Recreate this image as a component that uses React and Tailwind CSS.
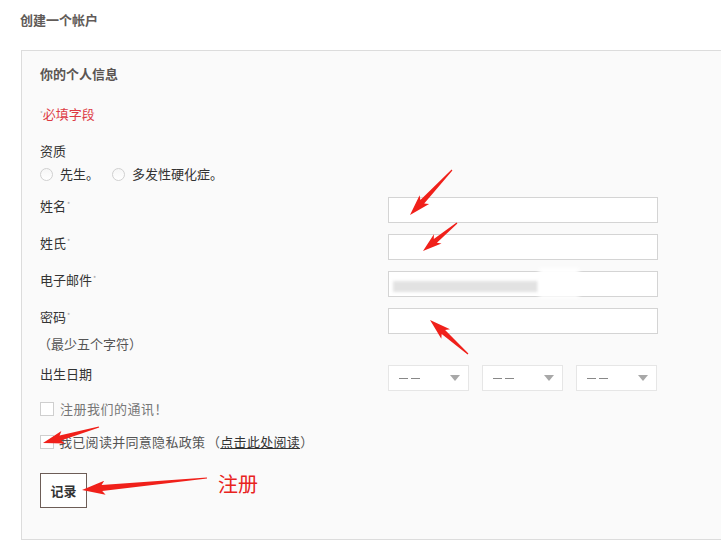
import React from "react";

const arrowPoints = (tx, ty, px, py, head = 18, hw = 6.5, sw = 2.4) => {
  const dx = px - tx;
  const dy = py - ty;
  const len = Math.hypot(dx, dy);
  const ux = dx / len;
  const uy = dy / len;
  const nx = -uy;
  const ny = ux;
  const neckX = px - ux * head;
  const neckY = py - uy * head;
  const barbX = neckX - ux * 3;
  const barbY = neckY - uy * 3;
  const pts = [
    [tx + nx * 0.6, ty + ny * 0.6],
    [neckX + nx * sw, neckY + ny * sw],
    [barbX + nx * hw, barbY + ny * hw],
    [px, py],
    [barbX - nx * hw, barbY - ny * hw],
    [neckX - nx * sw, neckY - ny * sw],
    [tx - nx * 0.6, ty - ny * 0.6],
  ];
  return pts.map((p) => p.map((v) => v.toFixed(1)).join(",")).join(" ");
};

const arrows = [
  [452, 170, 410, 215, 18, 6.5, 2.6],
  [457, 223, 423, 251, 16, 6, 2.4],
  [468, 354, 430, 320, 18, 6.5, 2.6],
  [99, 427, 43, 443, 18, 6.5, 2.6],
  [207, 478, 82, 490, 20, 7, 3],
];

const Req = () => <span className="text-[7px] text-[#999] align-top relative -top-[2px] ml-[1px]">*</span>;

const Field = ({ label, children, hint }) => (
  <div className="flex">
    <div className="w-[348px]">
      <div className="leading-[18px] text-[#333]">
        {label}
        <Req />
      </div>
      {hint && <div className="leading-[18px] mt-[9px] text-[#555] -ml-[2px]">{hint}</div>}
    </div>
    {children}
  </div>
);

const Input = ({ children }) => (
  <div className="relative w-[270px] h-[26px] border border-[#d4d4d4] bg-white">{children}</div>
);

const Select = () => (
  <div className="w-[81px] h-[26px] border border-[#e6e6e6] bg-white flex items-center justify-between pl-[10px] pr-[8px]">
    <span className="flex gap-[3px]">
      <span className="w-[9px] h-px bg-[#888]" />
      <span className="w-[9px] h-px bg-[#888]" />
    </span>
    <span className="w-0 h-0 border-l-[5px] border-r-[5px] border-t-[6px] border-l-transparent border-r-transparent border-t-[#a8a8a8]" />
  </div>
);

const Radio = () => (
  <span className="inline-block w-[13px] h-[13px] rounded-full border border-[#d0d0d0] bg-gradient-to-b from-[#f6f6f6] to-white" />
);

const Check = () => <span className="inline-block w-[14px] h-[14px] border border-[#cfcfcf] bg-white" />;

export default function App() {
  return (
    <div
      className="relative w-[721px] h-[542px] overflow-hidden bg-white text-[13px]"
      style={{ fontFamily: '"Noto Sans CJK SC", "Microsoft YaHei", sans-serif' }}
    >
      <h1 className="pl-5 pt-[11px] h-[50px] leading-[18px] text-[13px] font-bold text-[#615b58]">创建一个帐户</h1>

      <div className="ml-[21px] w-[720px] h-[490px] border border-[#dcdcdc] bg-[#fafafa] pl-[18px] pt-[13px]">
        <h2 className="leading-[20px] font-bold text-[#5a5552]">你的个人信息</h2>

        <div className="mt-[20px] leading-[20px] text-[#dd3a44]">
          <span className="text-[6px] text-[#aaa] align-top">*</span>必填字段
        </div>

        <div className="mt-[17px] leading-[20px] text-[#333]">资质</div>
        <div className="mt-[3px] leading-[20px] flex items-center text-[#333]">
          <Radio />
          <span className="ml-[7px]">先生。</span>
          <span className="ml-[13px] flex items-center">
            <Radio />
          </span>
          <span className="ml-[7px]">多发性硬化症。</span>
        </div>

        <div className="mt-[13px] flex flex-col gap-[11px]">
          <Field label="姓名">
            <Input />
          </Field>
          <Field label="姓氏">
            <Input />
          </Field>
          <Field label="电子邮件">
            <Input>
              <div className="absolute left-[4px] top-[9px] w-[145px] h-[11px] bg-[#e2e2e2] blur-[1.5px]" />
              <div className="absolute left-[150px] -top-[4px] w-[40px] h-[30px] bg-white blur-[2px]" />
            </Input>
          </Field>
          <Field label="密码" hint="（最少五个字符）">
            <Input />
          </Field>
        </div>

        <div className="mt-[12px] flex">
          <div className="w-[348px] leading-[18px] text-[#333]">出生日期</div>
          <div className="flex gap-[13px]">
            <Select />
            <Select />
            <Select />
          </div>
        </div>

        <div className="mt-[8px] leading-[20px] flex items-center text-[#777]">
          <Check />
          <span className="ml-[6px] tracking-[0.5px]">注册我们的通讯！</span>
        </div>
        <div className="mt-[13px] leading-[20px] flex items-center text-[#555]">
          <Check />
          <span className="ml-[5px] tracking-[0.3px]">
            我已阅读并同意隐私政策
            <span className="inline-block w-[15px] text-right">（</span>
            <span className="underline text-[#333]">点击此处阅读</span>
            <span className="inline-block w-[10px] text-left">）</span>
          </span>
        </div>

        <button className="mt-[21px] w-[47px] h-[35px] border border-[#6d5d57] bg-white font-bold text-[#333] text-[13px]">
          记录
        </button>
      </div>

      <span className="absolute left-[218px] top-[470px] text-[20px] leading-[28px] text-[#e8231e]">注册</span>

      <svg className="absolute inset-0 pointer-events-none" width="721" height="542">
        {arrows.map((a, i) => (
          <polygon key={i} points={arrowPoints(...a)} fill="#f0201a" />
        ))}
      </svg>
    </div>
  );
}
